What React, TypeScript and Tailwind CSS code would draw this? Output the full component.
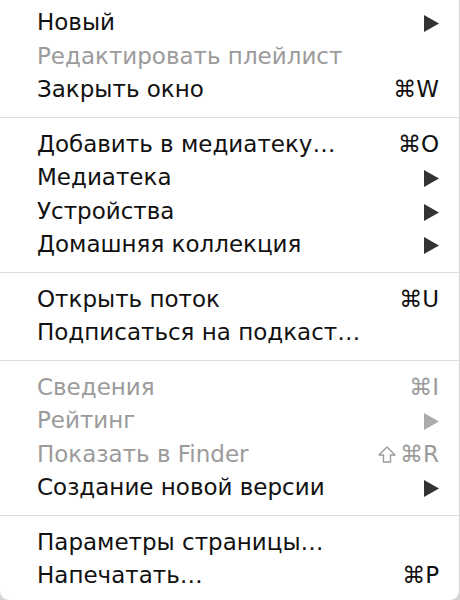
import React from 'react';

type Item =
    | { type: 'sep' }
    | { type: 'item'; label: string; shortcut?: string; shift?: boolean; submenu?: boolean; disabled?: boolean };

const items: Item[] = [
    { type: 'item', label: 'Новый', submenu: true },
    { type: 'item', label: 'Редактировать плейлист', disabled: true },
    { type: 'item', label: 'Закрыть окно', shortcut: '⌘W' },
    { type: 'sep' },
    { type: 'item', label: 'Добавить в медиатеку…', shortcut: '⌘O' },
    { type: 'item', label: 'Медиатека', submenu: true },
    { type: 'item', label: 'Устройства', submenu: true },
    { type: 'item', label: 'Домашняя коллекция', submenu: true },
    { type: 'sep' },
    { type: 'item', label: 'Открыть поток', shortcut: '⌘U' },
    { type: 'item', label: 'Подписаться на подкаст…' },
    { type: 'sep' },
    { type: 'item', label: 'Сведения', shortcut: '⌘I', disabled: true },
    { type: 'item', label: 'Рейтинг', submenu: true, disabled: true },
    { type: 'item', label: 'Показать в Finder', shortcut: '⌘R', shift: true, disabled: true },
    { type: 'item', label: 'Создание новой версии', submenu: true },
    { type: 'sep' },
    { type: 'item', label: 'Параметры страницы…' },
    { type: 'item', label: 'Напечатать…', shortcut: '⌘P' },
];

const Arrow = ({ disabled }: { disabled?: boolean }) => (
    <svg width="15" height="17" viewBox="0 0 15 17" className="mt-[2px]">
        <path d="M0 0 L15 8.5 L0 17 Z" fill={disabled ? '#ababab' : '#333'} />
    </svg>
);

// outlined shift key glyph
const ShiftIcon = () => (
    <svg width="18" height="17" viewBox="0 0 18 17" className="mr-[4px] mt-[1px]">
        <path
            d="M9 1 L17 9 L12.5 9 L12.5 16 L5.5 16 L5.5 9 L1 9 Z"
            fill="none"
            stroke="#9b9b9b"
            strokeWidth="1.4"
            strokeLinejoin="round"
        />
    </svg>
);

export default function App() {
    return (
        <div className="w-[460px] h-[600px] bg-[#d4d4d4]">
            <div
                className="w-[459px] h-[600px] bg-white rounded-b-[9px] pt-[6px] text-[23px] leading-[33.5px]"
                style={{ fontFamily: '"DejaVu Sans", "Liberation Sans", sans-serif' }}
            >
                {items.map((item, i) =>
                    item.type === 'sep' ? (
                        <div key={i} className="py-[10px]">
                            <div className="h-px bg-[#dedede]" />
                        </div>
                    ) : (
                        <div
                            key={i}
                            className={`flex items-center justify-between pl-[37px] pr-[20px] h-[33.5px] ${
                                item.disabled ? 'text-[#9b9b9b]' : 'text-[#111]'
                            }`}
                        >
                            <span className="whitespace-nowrap">{item.label}</span>
                            {item.shortcut && (
                                <span className="flex items-center whitespace-nowrap">
                                    {item.shift && <ShiftIcon />}
                                    {item.shortcut}
                                </span>
                            )}
                            {item.submenu && <Arrow disabled={item.disabled} />}
                        </div>
                    )
                )}
            </div>
        </div>
    );
}
